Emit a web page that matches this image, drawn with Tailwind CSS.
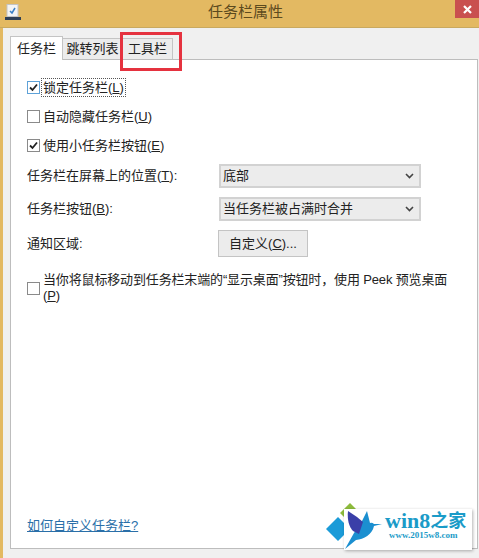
<!DOCTYPE html>
<html lang="zh-CN">
<head>
    <meta charset="UTF-8">
    <title>任务栏属性</title>
    <script src="https://cdn.jsdelivr.net/npm/@tailwindcss/browser@4"></script>
</head>
<body class="bg-[#f0f0f0] font-['Liberation_Sans','Noto_Sans_CJK_SC',sans-serif] text-[13px] text-[#222]">
<div class="relative w-[479px] h-[558px] overflow-hidden bg-[#f0f0f0]">
    <!-- title bar -->
    <div class="relative flex items-center justify-center h-[28px] bg-[#e3b962] border-b border-[#c9a95f] text-[#5c4a1e] text-[15px] pl-[12px]">
        <span class="mt-[-3px]">任务栏属性</span>
        <svg class="absolute left-[5px] top-[4px]" width="17" height="17" viewBox="0 0 17 17">
            <rect x="2" y="0.5" width="11" height="12" fill="#f4f4f4" stroke="#c4c4c4"/>
            <path d="M5 7l2 2 3-5" fill="none" stroke="#3a7fc4" stroke-width="1.5"/>
            <rect x="0" y="13" width="16" height="3" fill="#2f3f55"/>
        </svg>
        <div class="absolute right-0 top-0 flex items-center justify-center w-[24px] h-[18px] bg-[#c9504f]">
            <svg width="9" height="9" viewBox="0 0 9 9"><path d="M1 1l7 7M8 1l-7 7" stroke="#fff" stroke-width="2.2"/></svg>
        </div>
    </div>

    <div class="flex h-[530px]">
        <div class="w-[3px] bg-[#e3b962]"></div>
        <div class="flex-1 pl-[7px] pr-[1px] pt-[8px]">
            <!-- tabs -->
            <div class="flex items-end h-[23px] text-[13px]">
                <div class="relative z-10 flex items-center justify-center w-[53px] h-[24px] mb-[-1px] bg-white border border-b-0 border-[#c4c4c4]">任务栏</div>
                <div class="flex items-center justify-center w-[60px] h-[21px] bg-[#ececec] border border-b-0 border-l-0 border-[#c4c4c4]">跳转列表</div>
                <div class="flex items-center justify-center w-[50px] h-[21px] bg-[#ececec] border border-b-0 border-l-0 border-[#c4c4c4]">工具栏</div>
            </div>
            <!-- panel -->
            <div class="relative flex flex-col h-[490px] bg-white border border-[#bdbdbd] pl-[16px] pr-[14px]">
                <div class="flex flex-col gap-[14px] pt-[20px]">
                    <label class="flex items-center gap-[1px] h-[15px]">
                        <span class="flex items-center justify-center w-[13px] h-[13px] bg-white border border-[#5ea2d8]">
                            <svg width="11" height="11" viewBox="0 0 11 11"><path d="M2 5.5l2.5 2.5L9 2.5" fill="none" stroke="#222" stroke-width="1.8"/></svg>
                        </span>
                        <span class="px-[1px] border border-dotted border-[#555] leading-[17px]">锁定任务栏(<u>L</u>)</span>
                    </label>
                    <label class="flex items-center gap-[2px] h-[15px]">
                        <span class="w-[13px] h-[13px] bg-white border border-[#8a8a8a]"></span>
                        <span class="px-[1px]">自动隐藏任务栏(<u>U</u>)</span>
                    </label>
                    <label class="flex items-center gap-[2px] h-[15px]">
                        <span class="flex items-center justify-center w-[13px] h-[13px] bg-white border border-[#8a8a8a]">
                            <svg width="11" height="11" viewBox="0 0 11 11"><path d="M2 5.5l2.5 2.5L9 2.5" fill="none" stroke="#222" stroke-width="1.8"/></svg>
                        </span>
                        <span class="px-[1px]">使用小任务栏按钮(<u>E</u>)</span>
                    </label>
                </div>

                <div class="grid grid-cols-[192px_202px] items-center gap-y-[9px] mt-[11px]">
                    <span>任务栏在屏幕上的位置(<u>T</u>):</span>
                    <div class="flex items-center justify-between h-[24px] pl-[2px] pr-[5px] border-2 border-[#d2d2d2] bg-[#ececec]">
                        <span>底部</span>
                        <svg width="9" height="6" viewBox="0 0 9 6"><path d="M1 1l3.5 3.5L8 1" fill="none" stroke="#444" stroke-width="1.6"/></svg>
                    </div>
                    <span>任务栏按钮(<u>B</u>):</span>
                    <div class="flex items-center justify-between h-[24px] pl-[2px] pr-[5px] border-2 border-[#d2d2d2] bg-[#ececec]">
                        <span>当任务栏被占满时合并</span>
                        <svg width="9" height="6" viewBox="0 0 9 6"><path d="M1 1l3.5 3.5L8 1" fill="none" stroke="#444" stroke-width="1.6"/></svg>
                    </div>
                    <span>通知区域:</span>
                    <div class="flex items-center justify-center ml-[-1px] w-[90px] h-[27px] border border-[#c4c4c4] bg-[#ececec]">自定义(<u>C</u>)...</div>
                </div>

                <label class="flex items-center gap-[2px] mt-[15px] w-[430px]">
                    <span class="shrink-0 w-[13px] h-[13px] bg-white border border-[#8a8a8a]"></span>
                    <span class="px-[1px] leading-[16px] tracking-[-0.15px]">当你将鼠标移动到任务栏末端的“显示桌面”按钮时，使用 Peek 预览桌面<br>(<u>P</u>)</span>
                </label>

                <a class="mt-auto mb-[13px] text-[#2a6fa8] underline">如何自定义任务栏?</a>
            </div>
        </div>
    </div>

    <!-- red highlight on the screenshot -->
    <div class="absolute left-[120px] top-[32px] w-[62px] h-[39px] border-[3px] border-[#e5323f]"></div>

    <!-- watermark -->
    <svg class="absolute left-[326px] top-[503px]" width="34" height="38" viewBox="0 0 34 38">
        <path d="M24 0l10 10-10 10-10-10z" fill="#8dbb3c"/>
        <path d="M12 14l12 12-12 12L0 26z" fill="#1b9bd8"/>
    </svg>
    <div class="absolute left-[344px] top-[509px] w-[128px] h-[41px] bg-white shadow-[1px_1px_3px_rgba(0,0,0,0.3)]">
        <svg class="absolute left-0 top-0" width="40" height="41" viewBox="0 0 40 41">
            <path d="M1 40L10 24 18 12 23 2 26 14Q28 13 30 15L38 15 30 17C28 26 20 30 12 31z" fill="#1b8fd0"/>
            <path d="M4 2C3 10 5 18 9 22L15 25 19 13 13 8z" fill="#3a3fa8"/>
        </svg>
        <div class="absolute left-[41px] top-[2px] flex items-center h-[20px] font-['Liberation_Serif','Noto_Sans_CJK_SC',serif] font-bold text-[#1b9bc8] whitespace-nowrap">
            <span class="text-[22px] leading-[20px]">win8</span><span class="text-[18px] leading-[20px]">之家</span>
        </div>
        <div class="absolute left-[45px] top-[22px] font-['Liberation_Serif',serif] font-bold text-[9px] leading-[9px] text-[#1b9bc8] whitespace-nowrap">www.2015w8.com</div>
    </div>
</div>
</body>
</html>
